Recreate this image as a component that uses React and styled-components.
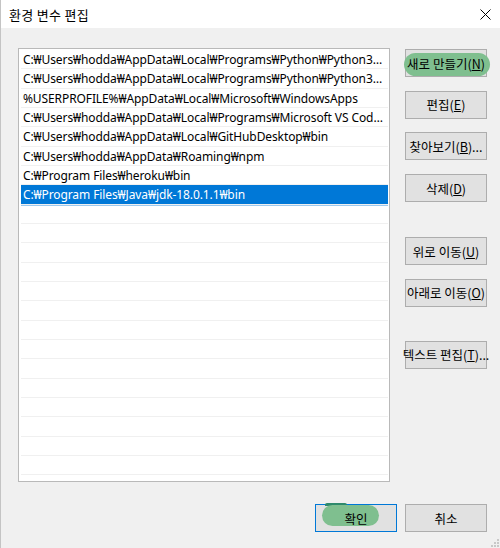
import React from 'react';
import styled, { createGlobalStyle } from 'styled-components';

const GlobalStyle = createGlobalStyle`
  html, body {
    margin: 0;
    padding: 0;
    background: #f0f0f0;
  }
  body {
    font-family: "Noto Sans", "Noto Sans CJK KR", sans-serif;
    font-size: 12px;
    color: #000;
  }
`;

const paths = [
  'C:₩Users₩hodda₩AppData₩Local₩Programs₩Python₩Python310₩Scripts₩',
  'C:₩Users₩hodda₩AppData₩Local₩Programs₩Python₩Python310₩',
  '%USERPROFILE%₩AppData₩Local₩Microsoft₩WindowsApps',
  'C:₩Users₩hodda₩AppData₩Local₩Programs₩Microsoft VS Code₩bin',
  'C:₩Users₩hodda₩AppData₩Local₩GitHubDesktop₩bin',
  'C:₩Users₩hodda₩AppData₩Roaming₩npm',
  'C:₩Program Files₩heroku₩bin',
  'C:₩Program Files₩Java₩jdk-18.0.1.1₩bin',
];

const Window = styled.div`
  width: 500px;
  height: 548px;
  display: flex;
  flex-direction: column;
  background: #f0f0f0;
  border-left: 1px solid #c4c4c4;
  box-sizing: border-box;
  overflow: hidden;
  position: relative;
`;

const TitleBar = styled.div`
  height: 28px;
  flex: none;
  background: #fff;
  display: flex;
  align-items: center;
  justify-content: space-between;
  padding: 0 9px 0 8px;
`;

const Title = styled.span`
  font-family: "Noto Sans CJK KR", sans-serif;
  font-size: 13px;
  letter-spacing: 0.3px;
`;

const Body = styled.div`
  flex: 1;
  display: flex;
  flex-direction: column;
  padding: 20px 13px 16px 17px;
`;

const Main = styled.div`
  display: flex;
  gap: 15px;
`;

const List = styled.div`
  width: 372px;
  height: 434px;
  box-sizing: border-box;
  border: 1px solid #b9b9b9;
  background: #fff;
  padding: 1px 1px 0 2px;
  overflow: hidden;
`;

const Row = styled.div`
  height: 19.33px;
  box-sizing: border-box;
  border-bottom: 1px solid #f0f0f0;
  padding: 1px 3px 0 2px;
  line-height: 18px;
  font-size: 12px;
  letter-spacing: -0.1px;
  white-space: nowrap;
  overflow: hidden;
  text-overflow: ellipsis;
  background: ${p => (p.$selected ? '#0078d7' : 'transparent')};
  color: ${p => (p.$selected ? '#fff' : '#000')};
  box-shadow: ${p => (p.$selected ? '0 1px 0 #9cc8ee' : 'none')};
`;

const Side = styled.div`
  width: 82px;
  display: flex;
  flex-direction: column;
  padding-top: 1px;
`;

const Group = styled.div`
  display: flex;
  flex-direction: column;
  gap: 13.7px;
  margin-top: ${p => p.$gap || 0}px;
`;

const Button = styled.div`
  position: relative;
  width: 82px;
  height: 28px;
  box-sizing: border-box;
  background: #e1e1e1;
  border: 1px solid ${p => (p.$default ? '#0078d7' : '#adadad')};
  display: flex;
  align-items: center;
  justify-content: center;
  font-family: "Noto Sans CJK KR", sans-serif;
  font-size: 12.5px;
  white-space: nowrap;
`;

const Label = styled.span`
  position: relative;
  z-index: 1;
  u {
    text-decoration: underline;
    text-underline-offset: 1px;
  }
`;

const Marker = styled.span`
  position: absolute;
  left: ${p => p.$left}px;
  top: ${p => p.$top}px;
  width: ${p => p.$w}px;
  height: ${p => p.$h}px;
  border-radius: ${p => p.$h / 2}px;
  background: #7fbf8f;
  z-index: 0;
`;

const MarkerEdge = styled.span`
  position: absolute;
  left: 9px;
  top: -2px;
  width: 22px;
  height: 3px;
  border-radius: 2px 2px 0 0;
  background: #2f8a6c;
  z-index: 0;
`;

const Footer = styled.div`
  display: flex;
  justify-content: flex-end;
  gap: 8px;
  margin-top: 22px;
`;

const Grip = styled.svg`
  position: absolute;
  right: 1px;
  bottom: 1px;
`;

const CloseIcon = () => (
  <svg width="11" height="11" viewBox="0 0 11 11">
    <path d="M0.5 0.5 L10.5 10.5 M10.5 0.5 L0.5 10.5" stroke="#000" strokeWidth="1" />
  </svg>
);

export default function App() {
  const empty = Array.from({ length: 16 });
  return (
    <>
      <GlobalStyle />
      <Window>
        <TitleBar>
          <Title>환경 변수 편집</Title>
          <CloseIcon />
        </TitleBar>
        <Body>
          <Main>
            <List>
              {paths.map((p, i) => (
                <Row key={i} $selected={i === paths.length - 1}>{p}</Row>
              ))}
              {empty.map((_, i) => (
                <Row key={'e' + i} />
              ))}
            </List>
            <Side>
              <Group>
                <Button>
                  <Marker $left={-2} $top={3} $w={86} $h={23} />
                  <Label>새로 만들기(<u>N</u>)</Label>
                </Button>
                <Button><Label>편집(<u>E</u>)</Label></Button>
                <Button><Label>찾아보기(<u>B</u>)...</Label></Button>
                <Button><Label>삭제(<u>D</u>)</Label></Button>
              </Group>
              <Group $gap={35}>
                <Button><Label>위로 이동(<u>U</u>)</Label></Button>
                <Button><Label>아래로 이동(<u>O</u>)</Label></Button>
              </Group>
              <Group $gap={34}>
                <Button><Label>텍스트 편집(<u>T</u>)...</Label></Button>
              </Group>
            </Side>
          </Main>
          <Footer>
            <Button $default>
              <MarkerEdge />
              <Marker $left={6} $top={0} $w={57} $h={21} />
              <Label>확인</Label>
            </Button>
            <Button><Label>취소</Label></Button>
          </Footer>
        </Body>
        <Grip width="8" height="8" viewBox="0 0 8 8">
          <rect x="6" y="0" width="2" height="2" fill="#c8c8c8" />
          <rect x="3" y="3" width="2" height="2" fill="#c8c8c8" />
          <rect x="6" y="3" width="2" height="2" fill="#c8c8c8" />
          <rect x="0" y="6" width="2" height="2" fill="#c8c8c8" />
          <rect x="3" y="6" width="2" height="2" fill="#c8c8c8" />
          <rect x="6" y="6" width="2" height="2" fill="#c8c8c8" />
        </Grip>
      </Window>
    </>
  );
}
